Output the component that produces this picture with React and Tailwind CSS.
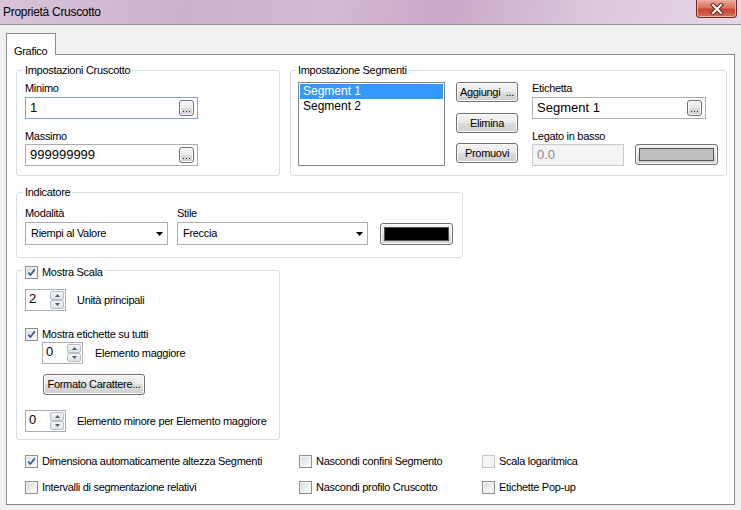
import React from "react";

const LBL = "text-[11px] leading-[13px] tracking-[-0.3px] text-black whitespace-nowrap";

const BTN =
  "flex items-center justify-center rounded-[3px] border border-[#707070] bg-[linear-gradient(to_bottom,#f2f2f2_0%,#ebebeb_50%,#dddddd_50%,#cfcfcf_100%)] shadow-[inset_0_0_0_1px_#fcfcfc]";

const Dots = () => (
  <div className={`${BTN} ml-auto mr-[3px] w-[15px] h-[16px] rounded-[2px] items-end pb-[3px]`}>
    <svg width="7" height="1" viewBox="0 0 7 1">
      <rect x="0" y="0" width="1" height="1" fill="#222" />
      <rect x="3" y="0" width="1" height="1" fill="#222" />
      <rect x="6" y="0" width="1" height="1" fill="#222" />
    </svg>
  </div>
);

const TextBox = ({ value, focused, className = "" }) => (
  <div
    className={`flex items-center h-[22px] border bg-white pl-[4px] ${
      focused ? "border-[#7da2ce]" : "border-[#abadb3]"
    } ${className}`}
  >
    <span className="text-[13px] leading-[15px] pb-[2px]">{value}</span>
    <Dots />
  </div>
);

const Check = ({ checked, disabled }) => (
  <div
    className={`w-[13px] h-[13px] shrink-0 border flex items-center justify-center ${
      disabled
        ? "border-[#c7c7c7] bg-[#f6f6f6]"
        : "border-[#8e8f8f] bg-[linear-gradient(135deg,#d6d9dc,#ffffff)] shadow-[inset_0_0_0_1px_#f4f4f4]"
    }`}
  >
    {checked && (
      <svg width="9" height="9" viewBox="0 0 9 9">
        <path d="M1.2 4.6 L3.4 7 L7.8 1.4" stroke="#3b5a8f" strokeWidth="1.7" fill="none" />
      </svg>
    )}
  </div>
);

const CheckRow = ({ label, checked, disabled, className = "" }) => (
  <div className={`flex items-center h-[13px] gap-[4px] ${className}`}>
    <Check checked={checked} disabled={disabled} />
    <span className={`${LBL} ${disabled ? "text-[#a0a0a0]" : ""}`}>{label}</span>
  </div>
);

const SpinBtn = ({ up }) => (
  <div className="flex-1 flex items-center justify-center border border-[#b8bcc4] rounded-[2px] bg-[linear-gradient(to_bottom,#f5f6f8,#dde0e6)]">
    <svg width="5" height="3" viewBox="0 0 5 3">
      <path d={up ? "M0 3 L2.5 0 L5 3Z" : "M0 0 L5 0 L2.5 3Z"} fill="#4d5a70" />
    </svg>
  </div>
);

const Spin = ({ value }) => (
  <div className="flex h-[22px] w-[41px] border border-[#abadb3] bg-white">
    <span className="flex-1 pl-[3px] text-[13px] leading-[18px]">{value}</span>
    <div className="flex flex-col w-[15px] py-px pr-px">
      <SpinBtn up />
      <SpinBtn />
    </div>
  </div>
);

const Combo = ({ text, className }) => (
  <div className={`flex items-center h-[23px] border border-[#abadb3] bg-white pl-[5px] pr-[4px] ${className}`}>
    <span className={`flex-1 ${LBL}`}>{text}</span>
    <svg width="7" height="4" viewBox="0 0 7 4">
      <path d="M0 0 H7 L3.5 4Z" fill="#000" />
    </svg>
  </div>
);

const ColorBtn = ({ color, className }) => (
  <div className={`${BTN} p-[3px] ${className}`}>
    <div className="w-full h-full border border-[#555]" style={{ background: color }} />
  </div>
);

const Group = ({ legend, className = "", children }) => (
  <fieldset className={`border border-[#d5dfe5] rounded-[3px] pl-[8px] ${className}`}>
    <legend className={`${LBL} -ml-[2px] px-[2px]`}>{legend}</legend>
    {children}
  </fieldset>
);

export default function App() {
  return (
    <div className="w-[741px] h-[510px] bg-[#f0f0f0] overflow-hidden font-['Liberation_Sans',Arial,sans-serif] text-black">
      {/* title bar */}
      <div className="flex h-[25px] border-b border-[#9e929e] bg-[linear-gradient(100deg,#d9c4d9_0%,#cdb0cd_25%,#d4b8d4_45%,#c9a8c9_60%,#dcc8dc_80%,#e6d6e6_100%)]">
        <span className="pl-[3px] pt-[5px] text-[12px] leading-[14px] tracking-[-0.3px]">Proprietà Cruscotto</span>
        <div className="ml-auto mr-[4px] w-[41px] h-[18px] rounded-b-[4px] border border-t-0 border-[#6e2a22] bg-[linear-gradient(to_bottom,#e9a998_0%,#d9735d_45%,#c6452f_55%,#d8705a_100%)] shadow-[inset_0_0_0_1px_#eeb0a4] flex items-center justify-center">
          <svg width="14" height="12" viewBox="0 0 14 12">
            <path d="M3 2 L11 10 M11 2 L3 10" stroke="#5a1d16" strokeWidth="4" strokeLinecap="square" />
            <path d="M3 2 L11 10 M11 2 L3 10" stroke="#ffffff" strokeWidth="2.2" strokeLinecap="square" />
          </svg>
        </div>
      </div>

      <div className="pt-[8px] pl-[6px]">
        <div className="flex">
          <div className="relative z-10 -mb-px h-[22px] w-[50px] border border-b-0 border-[#898c95] bg-white pl-[7px] pt-[4px]">
            <span className={LBL}>Grafico</span>
          </div>
        </div>

        <div className="w-[729px] h-[451px] border border-[#898c95] bg-white pl-[9px] pt-[9px]">
          {/* row 1 */}
          <div className="flex gap-[10px]">
            <Group legend="Impostazioni Cruscotto" className="w-[264px] h-[112px]">
              <div className={`${LBL} mt-[5px]`}>Minimo</div>
              <TextBox value="1" focused className="mt-[2px] w-[173px]" />
              <div className={`${LBL} mt-[11px]`}>Massimo</div>
              <TextBox value="999999999" className="mt-[1px] w-[173px]" />
            </Group>

            <Group legend="Impostazione Segmenti" className="w-[437px] h-[112px] !pl-[7px]">
              <div className="flex">
                <div className="mt-[5px] w-[147px] h-[84px] border border-[#828790] bg-white p-px">
                  <div className="h-[15px] bg-[#3399ff] text-white text-[12px] leading-[15px] pl-[3px]">Segment 1</div>
                  <div className="h-[15px] text-[12px] leading-[15px] pl-[3px]">Segment 2</div>
                </div>
                <div className="ml-[11px] mt-[5px] flex flex-col">
                  <div className={`${BTN} w-[62px] h-[20px]`}>
                    <span className={LBL}>Aggiungi &nbsp;...</span>
                  </div>
                  <div className={`${BTN} w-[62px] h-[20px] mt-[11px]`}>
                    <span className={LBL}>Elimina</span>
                  </div>
                  <div className={`${BTN} w-[62px] h-[20px] mt-[10px]`}>
                    <span className={LBL}>Promuovi</span>
                  </div>
                </div>
                <div className="ml-[14px]">
                  <div className={`${LBL} mt-[5px]`}>Etichetta</div>
                  <TextBox value="Segment 1" className="mt-[2px] w-[174px]" />
                  <div className={`${LBL} mt-[11px]`}>Legato in basso</div>
                  <div className="flex mt-[1px]">
                    <div className="w-[92px] h-[22px] border border-[#c9c9c9] bg-[#f4f4f4] pl-[4px] text-[13px] leading-[19px] text-[#8c8c8c]">
                      0.0
                    </div>
                    <ColorBtn color="#c0c0c0" className="ml-[11px] w-[83px] h-[21px]" />
                  </div>
                </div>
              </div>
            </Group>
          </div>

          {/* row 2 */}
          <Group legend="Indicatore" className="mt-[10px] w-[447px] h-[72px]">
            <div className="flex">
              <div className="w-[143px]">
                <div className={`${LBL} mt-[8px]`}>Modalità</div>
                <Combo text="Riempi al Valore" className="mt-[2px] w-[143px]" />
              </div>
              <div className="ml-[9px] w-[191px]">
                <div className={`${LBL} mt-[8px]`}>Stile</div>
                <Combo text="Freccia" className="mt-[2px] w-[191px]" />
              </div>
              <ColorBtn color="#000000" className="ml-[12px] mt-[24px] w-[73px] h-[22px]" />
            </div>
          </Group>

          {/* row 3 */}
          <fieldset className="mt-[6px] w-[264px] h-[176px] border border-[#d5dfe5] rounded-[3px] pl-[8px]">
            <legend className="-ml-[2px] px-[2px]">
              <CheckRow label="Mostra Scala" checked className="relative top-[2px]" />
            </legend>
            <div className="flex items-center mt-[12px]">
              <Spin value="2" />
              <span className={`${LBL} ml-[11px]`}>Unità principali</span>
            </div>
            <div className="mt-[17px]">
              <CheckRow label="Mostra etichette su tutti" checked />
            </div>
            <div className="flex items-center mt-[1px] ml-[17px]">
              <Spin value="0" />
              <span className={`${LBL} ml-[12px]`}>Elemento maggiore</span>
            </div>
            <div className={`${BTN} ml-[18px] mt-[10px] w-[102px] h-[21px]`}>
              <span className={LBL}>Formato Carattere...</span>
            </div>
            <div className="flex items-center mt-[15px]">
              <Spin value="0" />
              <span className={`${LBL} ml-[11px]`}>Elemento minore per Elemento maggiore</span>
            </div>
          </fieldset>

          {/* bottom options */}
          <div className="grid grid-cols-[274px_183px_auto] gap-y-[13px] ml-[9px] mt-[15px]">
            <CheckRow label="Dimensiona automaticamente altezza Segmenti" checked />
            <CheckRow label="Nascondi confini Segmento" />
            <CheckRow label="Scala logaritmica" disabled />
            <CheckRow label="Intervalli di segmentazione relativi" />
            <CheckRow label="Nascondi profilo Cruscotto" />
            <CheckRow label="Etichette Pop-up" />
          </div>
        </div>
      </div>
    </div>
  );
}
